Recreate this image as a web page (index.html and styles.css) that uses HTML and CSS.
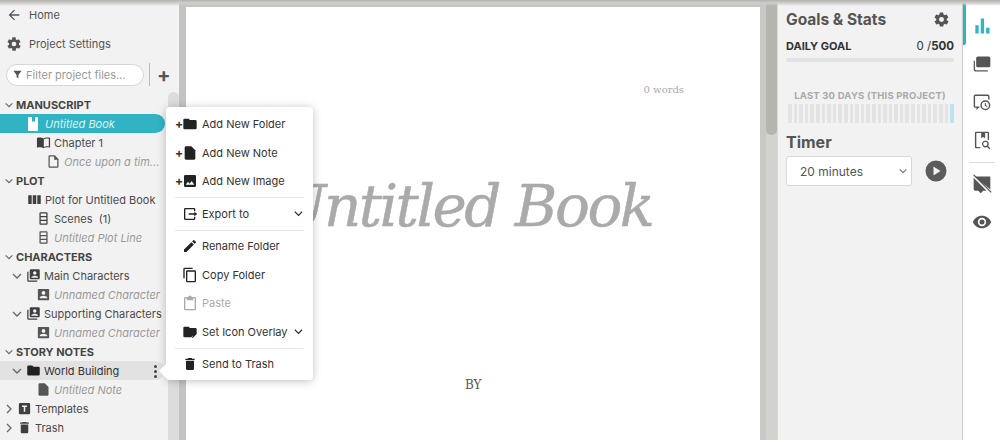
FILE: index.html
```html
<!DOCTYPE html>
<html lang="en">
<head>
<meta charset="utf-8">
<title>Untitled Book</title>
<link rel="stylesheet" href="styles.css">
</head>
<body>
<svg class="defs" width="0" height="0" aria-hidden="true">
  <symbol id="i-folder" viewBox="0 0 24 24"><path d="M10 4H4a2 2 0 0 0-2 2v12a2 2 0 0 0 2 2h16a2 2 0 0 0 2-2V8a2 2 0 0 0-2-2h-8z"/></symbol>
  <symbol id="i-note" viewBox="0 0 24 24"><path d="M14 2H6a2 2 0 0 0-2 2v16a2 2 0 0 0 2 2h12a2 2 0 0 0 2-2V8z"/></symbol>
  <symbol id="i-person" viewBox="0 0 24 24"><path d="M20 3H4a1 1 0 0 0-1 1v16a1 1 0 0 0 1 1h16a1 1 0 0 0 1-1V4a1 1 0 0 0-1-1zm-8 3.500a3 3 0 1 1 0 6 3 3 0 0 1 0-6zM18 18H6v-1c0-2 4-3.100 6-3.100s6 1.100 6 3.100z" fill-rule="evenodd"/></symbol>
  <symbol id="i-persons" viewBox="0 0 24 24"><path d="M2 6h2v14h14v2H4a2 2 0 0 1-2-2z"/><path fill-rule="evenodd" d="M8 2h12a2 2 0 0 1 2 2v12a2 2 0 0 1-2 2H8a2 2 0 0 1-2-2V4a2 2 0 0 1 2-2zm6 3a2.800 2.800 0 1 0 0 5.600A2.800 2.800 0 0 0 14 5zm-5.500 10.500h11V15c0-1.800-3.700-2.800-5.500-2.800S8.500 13.200 8.500 15z"/></symbol>
  <symbol id="i-lane" viewBox="0 0 24 24"><path fill-rule="evenodd" d="M7 2h10a1.500 1.500 0 0 1 1.500 1.500v17A1.500 1.500 0 0 1 17 22H7a1.500 1.500 0 0 1-1.500-1.500v-17A1.500 1.500 0 0 1 7 2zm.500 2v4h9V4zm0 6v4h9v-4zm0 6v4h9v-4z"/></symbol>
  <symbol id="i-trash" viewBox="0 0 24 24"><path d="M6 19a2 2 0 0 0 2 2h8a2 2 0 0 0 2-2V7H6zM19 4h-3.500l-1-1h-5l-1 1H5v2h14z"/></symbol>
  <symbol id="i-gear" viewBox="0 0 24 24"><path d="M19.400 13c.04-.3.100-.7.100-1s-.03-.7-.1-1l2.100-1.600c.2-.15.25-.4.1-.65l-2-3.460c-.12-.22-.4-.3-.6-.22l-2.500 1a7.400 7.400 0 0 0-1.700-1l-.4-2.650A.5.500 0 0 0 14 2h-4a.5.500 0 0 0-.5.420l-.4 2.650c-.6.250-1.200.6-1.700 1l-2.500-1c-.2-.08-.5 0-.6.220l-2 3.460c-.13.220-.08.500.1.650L4.600 11c-.04.300-.1.700-.1 1s.03.700.1 1l-2.100 1.600c-.2.150-.25.400-.1.650l2 3.460c.12.220.4.300.6.220l2.500-1c.5.400 1.100.750 1.700 1l.4 2.650c.04.240.25.420.5.420h4c.25 0 .46-.18.500-.42l.4-2.650c.6-.25 1.200-.6 1.700-1l2.500 1c.2.080.5 0 .6-.22l2-3.460c.13-.22.080-.5-.1-.65zM12 15.500a3.500 3.500 0 1 1 0-7 3.500 3.500 0 0 1 0 7z"/></symbol>
  <symbol id="i-down" viewBox="0 0 12 12"><path d="M2 4l4 4 4-4" fill="none" stroke="currentColor" stroke-width="1.300"/></symbol>
  <symbol id="i-right" viewBox="0 0 12 12"><path d="M4 2l4 4-4 4" fill="none" stroke="currentColor" stroke-width="1.300"/></symbol>
</svg>

<div class="topline"></div>
<div class="app">
  <aside class="sidebar">
    <a class="nav-link"><svg class="nav-icon" viewBox="0 0 24 24"><path d="M20 11H7.800l5.600-5.600L12 4l-8 8 8 8 1.400-1.400L7.800 13H20z"/></svg>Home</a>
    <a class="nav-link"><svg class="nav-icon"><use href="#i-gear"/></svg>Project Settings</a>
    <div class="filter-row">
      <div class="filter"><svg class="filter-icon" viewBox="0 0 24 24"><path d="M3 4h18l-7 9v7l-4-2v-5z"/></svg>Filter project files...</div>
      <span class="filter-sep"></span>
      <span class="plus">+</span>
    </div>

    <div class="tree">
      <div class="row sec"><svg class="tw"><use href="#i-down"/></svg>MANUSCRIPT</div>
      <div class="row selected ind-28"><svg class="ic book" viewBox="0 0 10 14"><path fill-rule="evenodd" d="M1 0h8a1 1 0 0 1 1 1v12a1 1 0 0 1-1 1H1a1 1 0 0 1-1-1V1a1 1 0 0 1 1-1zm3 0v5l1.500-1L7 5V0z"/></svg>Untitled Book</div>
      <div class="row ind-35"><svg class="ic" viewBox="0 0 24 24"><path d="M12 5.500C10.500 4.500 8 4 6 4c-1.500 0-3 .2-4.500.8v15.500C3 19.700 4.500 19.500 6 19.500c2 0 4.500.5 6 1.500 1.500-1 4-1.500 6-1.500 1.500 0 3 .2 4.500.8V4.800C21 4.200 19.500 4 18 4c-2 0-4.500.5-6 1.500zm8.500 13c-1-.3-1.800-.4-2.500-.4-2 0-4.500.8-5.500 1.400V7c1-.6 3.500-1.400 5.500-1.400.7 0 1.500.1 2.500.3z"/></svg>Chapter 1</div>
      <div class="row muted ind-45"><svg class="ic" viewBox="0 0 24 24"><path d="M14 2H6a2 2 0 0 0-2 2v16a2 2 0 0 0 2 2h12a2 2 0 0 0 2-2V8zm4 18H6V4h7v5h5z"/></svg>Once upon a tim...</div>
      <div class="row sec"><svg class="tw"><use href="#i-down"/></svg>PLOT</div>
      <div class="row ind-26"><svg class="ic" viewBox="0 0 24 24"><path d="M2 5h5.500v14H2zm7.200 0h5.600v14H9.200zm7.300 0H22v14h-5.500z"/></svg>Plot for Untitled Book</div>
      <div class="row ind-35"><svg class="ic"><use href="#i-lane"/></svg>Scenes&nbsp; (1)</div>
      <div class="row muted ind-35"><svg class="ic"><use href="#i-lane"/></svg>Untitled Plot Line</div>
      <div class="row sec"><svg class="tw"><use href="#i-down"/></svg>CHARACTERS</div>
      <div class="row ind-13"><svg class="tw"><use href="#i-down"/></svg><svg class="ic"><use href="#i-persons"/></svg>Main Characters</div>
      <div class="row muted ind-35"><svg class="ic"><use href="#i-person"/></svg>Unnamed Character</div>
      <div class="row ind-13"><svg class="tw"><use href="#i-down"/></svg><svg class="ic"><use href="#i-persons"/></svg>Supporting Characters</div>
      <div class="row muted ind-35"><svg class="ic"><use href="#i-person"/></svg>Unnamed Character</div>
      <div class="row sec"><svg class="tw"><use href="#i-down"/></svg>STORY NOTES</div>
      <div class="row active ind-13"><svg class="tw"><use href="#i-down"/></svg><svg class="ic dark"><use href="#i-folder"/></svg>World Building<span class="dots"><i></i><i></i><i></i></span></div>
      <div class="row muted ind-35"><svg class="ic"><use href="#i-note"/></svg>Untitled Note</div>
      <div class="row ind-4"><svg class="tw"><use href="#i-right"/></svg><svg class="ic" viewBox="0 0 24 24"><path fill-rule="evenodd" d="M5 3h14a2 2 0 0 1 2 2v14a2 2 0 0 1-2 2H5a2 2 0 0 1-2-2V5a2 2 0 0 1 2-2zm3 4v2.500h2.800V17h2.400V9.500H16V7z"/></svg>Templates</div>
      <div class="row ind-4"><svg class="tw"><use href="#i-right"/></svg><svg class="ic"><use href="#i-trash"/></svg>Trash</div>
    </div>
    <div class="side-thumb"></div>
  </aside>

  <main class="center">
    <div class="page">
      <div class="wordcount">0 words</div>
      <h1 class="book-title">Untitled Book</h1>
      <div class="by">BY</div>
    </div>
    <div class="center-scroll"><div class="center-thumb"></div></div>
  </main>

  <section class="stats">
    <div class="stats-head"><h2>Goals &amp; Stats</h2><svg class="stats-gear"><use href="#i-gear"/></svg></div>
    <div class="goal-row"><b>DAILY GOAL</b><span>0 /<b>500</b></span></div>
    <div class="goal-bar"></div>
    <div class="last30">LAST 30 DAYS (THIS PROJECT)</div>
    <div class="days">
      <i></i><i></i><i></i><i></i><i></i><i></i><i></i><i></i><i></i><i></i>
      <i></i><i></i><i></i><i></i><i></i><i></i><i></i><i></i><i></i><i></i>
      <i></i><i></i><i></i><i></i><i></i><i></i><i></i><i></i><i></i><i class="today"></i>
    </div>
    <h3 class="timer-title">Timer</h3>
    <div class="timer-row">
      <div class="select">20 minutes<svg class="select-arrow"><use href="#i-down"/></svg></div>
      <svg class="play" viewBox="0 0 24 24"><path fill-rule="evenodd" d="M12 1.500a10.500 10.500 0 1 1 0 21 10.500 10.500 0 0 1 0-21zM9.500 7.500v9l7-4.500z"/></svg>
    </div>
  </section>

  <nav class="rail">
    <div class="rail-item current"><svg viewBox="0 0 24 24" class="teal"><path d="M4 11h4v10H4zM10.500 3h4v18h-4zM17 14h4v7h-4z"/></svg></div>
    <div class="rail-item"><svg viewBox="0 0 24 24"><path d="M7 3h13a2 2 0 0 1 2 2v9a2 2 0 0 1-2 2H7a2 2 0 0 1-2-2V5a2 2 0 0 1 2-2z"/><path d="M2 8h1.500v10a1.500 1.500 0 0 0 1.500 1.500h14V21H4a2 2 0 0 1-2-2z"/></svg></div>
    <div class="rail-item"><svg viewBox="0 0 24 24"><path d="M4 3h15a2 2 0 0 1 2 2v4h-1.700V5a.4.400 0 0 0-.3-.3H4a.4.400 0 0 0-.3.300v12c0 .2.100.3.300.3h5V19H8l-2.500 3v-3H4a2 2 0 0 1-2-2V5a2 2 0 0 1 2-2z"/><path fill-rule="evenodd" d="M16 10a6 6 0 1 1 0 12 6 6 0 0 1 0-12zm0 1.700a4.300 4.300 0 1 0 0 8.600 4.300 4.300 0 0 0 0-8.600zm-.7 1.500h1.300v2.700l2 1.200-.6 1-2.700-1.600z"/></svg></div>
    <div class="rail-item"><svg viewBox="0 0 24 24"><path d="M5 2h14a1.500 1.500 0 0 1 1.500 1.500V12h-1.700V3.700h-3V10l-2.500-1.500L11 10V3.700H5.200v16.600H10V22H5a1.500 1.500 0 0 1-1.500-1.500v-17A1.500 1.500 0 0 1 5 2z"/><path fill-rule="evenodd" d="M16 12.500a4.200 4.200 0 0 1 3.400 6.700l2.800 2.800-1.200 1.200-2.800-2.800A4.200 4.200 0 1 1 16 12.500zm0 1.700a2.500 2.500 0 1 0 0 5 2.500 2.500 0 0 0 0-5z"/></svg></div>
    <div class="rail-sep"></div>
    <div class="rail-item"><svg viewBox="0 0 24 24"><path d="M3 3h19v15.500zM2 4.500 17.500 20H13.500L10.500 23 7.500 20H4a2 2 0 0 1-2-2z"/><path d="M2 1 23 22" stroke="#555" stroke-width="1.500"/></svg></div>
    <div class="rail-item"><svg viewBox="0 0 24 24"><path fill-rule="evenodd" d="M12 4.500C7 4.500 2.700 7.600 1 12c1.700 4.400 6 7.500 11 7.500s9.300-3.100 11-7.500c-1.700-4.400-6-7.500-11-7.500zM12 17a5 5 0 1 1 0-10 5 5 0 0 1 0 10zm0-8a3 3 0 1 0 0 6 3 3 0 0 0 0-6z"/></svg></div>
  </nav>
</div>

<div class="menu">
  <div class="menu-item"><span class="add">+</span><svg class="mi"><use href="#i-folder"/></svg>Add New Folder</div>
  <div class="menu-item"><span class="add">+</span><svg class="mi"><use href="#i-note"/></svg>Add New Note</div>
  <div class="menu-item"><span class="add">+</span><svg class="mi" viewBox="0 0 24 24"><path fill-rule="evenodd" d="M5 3h14a2 2 0 0 1 2 2v14a2 2 0 0 1-2 2H5a2 2 0 0 1-2-2V5a2 2 0 0 1 2-2zm.500 14.500h13l-4-5.500-3.200 4-2.300-2.800z"/></svg>Add New Image</div>
  <hr class="menu-sep">
  <div class="menu-item"><svg class="mi" viewBox="0 0 24 24"><path d="M5 3h13a2 2 0 0 1 2 2v3h-2V5H5v14h13v-3h2v3a2 2 0 0 1-2 2H5a2 2 0 0 1-2-2V5a2 2 0 0 1 2-2z"/><path d="M10 11h8.500V8.500L23 12l-4.500 3.500V13H10z"/></svg>Export to<svg class="chev"><use href="#i-down"/></svg></div>
  <hr class="menu-sep">
  <div class="menu-item"><svg class="mi" viewBox="0 0 24 24"><path d="M3 17.300V21h3.700L17.800 9.900l-3.700-3.700zM20.700 7a1 1 0 0 0 0-1.400l-2.300-2.300a1 1 0 0 0-1.400 0l-1.800 1.800 3.700 3.700z"/></svg>Rename Folder</div>
  <div class="menu-item"><svg class="mi" viewBox="0 0 24 24"><path d="M16 1H4a2 2 0 0 0-2 2v14h2V3h12z"/><path fill-rule="evenodd" d="M19 5H8a2 2 0 0 0-2 2v14a2 2 0 0 0 2 2h11a2 2 0 0 0 2-2V7a2 2 0 0 0-2-2zm0 16H8V7h11z"/></svg>Copy Folder</div>
  <div class="menu-item disabled"><svg class="mi" viewBox="0 0 24 24"><path fill-rule="evenodd" d="M19 3h-4.200C14.400 1.800 13.300 1 12 1s-2.400.8-2.800 2H5a2 2 0 0 0-2 2v16a2 2 0 0 0 2 2h14a2 2 0 0 0 2-2V5a2 2 0 0 0-2-2zm0 18H5V5h2v3h10V5h2z"/></svg>Paste</div>
  <div class="menu-item"><svg class="mi" viewBox="0 0 24 24"><path d="M10 4H4a2 2 0 0 0-2 2v12a2 2 0 0 0 2 2h10l1-2.500 3 1 4-4V8a2 2 0 0 0-2-2h-8z"/><path d="M16 21l-2.500-2.500 1-1L16 19l5-5 1 1z"/></svg>Set Icon Overlay<svg class="chev"><use href="#i-down"/></svg></div>
  <hr class="menu-sep">
  <div class="menu-item"><svg class="mi"><use href="#i-trash"/></svg>Send to Trash</div>
</div>
</body>
</html>
```
FILE: styles.css
```css
* { box-sizing: border-box; }
html, body { margin: 0; height: 100%; overflow: hidden; }
body { font-family: Inter, "Liberation Sans", sans-serif; color: #3c3c3c; background: #fff; position: relative; }
.defs { display: block; position: absolute; }
.topline { height: 6px; margin-bottom: -6px; background: linear-gradient(#b4b2ad 0, #cfcecb 3px, #fff0 6px); position: relative; z-index: 3; }
.app { display: flex; height: 440px; }

.sidebar { width: 179px; flex: none; background: #f2f2f2; position: relative; overflow: hidden; }
.nav-link { display: flex; align-items: center; height: 29px; padding-left: 6px; font-size: 11px; color: #555; gap: 7px; }
.nav-icon { width: 16px; height: 16px; fill: #555; flex: none; }
.filter-row { display: flex; align-items: center; margin-top: 1px; padding: 0 0 0 6px; height: 31px; }
.filter { width: 138px; height: 22px; border: 1px solid #d6d6d6; border-radius: 11px; background: #fff; color: #9a9a9a; font-size: 11px; display: flex; align-items: center; padding-left: 5px; gap: 3px; flex: none; }
.filter-icon { width: 11px; height: 11px; fill: #555; flex: none; }
.filter-sep { width: 1px; height: 23px; background: #bbb; margin-left: 5px; }
.plus { font-size: 20px; font-weight: 700; color: #555; margin-left: 7px; line-height: 20px; }

.tree { margin-top: 5px; }
.row { height: 19px; display: flex; align-items: center; font-size: 11px; color: #4a4a4a; white-space: nowrap; position: relative; }
.sec { font-weight: 700; color: #444; padding-left: 4px; font-size: 11px; }
.ic { width: 15px; height: 15px; fill: #3f3f3f; flex: none; margin-right: 3px; }
.ic.dark { fill: #222; }
.tw { width: 12px; height: 12px; color: #666; flex: none; }
.sec .tw { width: 10px; margin-right: 2px; }
.muted { color: #9a9a9a; font-style: italic; }
.muted .ic { fill: #555; }
.selected { background: #31b3c4; color: #dff4f7; font-style: italic; width: 165px; border-radius: 0 10px 10px 0; }
.selected .ic.book { fill: #fff; width: 10px; height: 14px; margin-right: 7px; }
.active { background: #e2e2e2; width: 165px; color: #333; border-radius: 0 10px 10px 0; }
.ind-4 { padding-left: 3px; }
.ind-4 .tw { margin-right: 2px; }
.ind-13 { padding-left: 11px; }
.ind-13 .tw { margin-right: 3px; }
.ind-26 { padding-left: 27px; }
.ind-28 { padding-left: 28px; }
.ind-35 { padding-left: 36px; }
.ind-45 { padding-left: 46px; }
.dots { position: absolute; left: 154px; top: 4px; display: flex; flex-direction: column; gap: 2px; }
.dots i { display: block; width: 3px; height: 3px; border-radius: 50%; background: #444; }
.side-thumb { position: absolute; left: 168px; top: 92px; width: 11px; bottom: 0; border-radius: 6px 6px 0 0; background: #dcdcdc; }

.center { flex: 1; background: #c3c3bf; display: flex; padding-left: 7px; position: relative; overflow: hidden; }
.page { width: 574px; background: #fff; margin-top: 7px; position: relative; flex: none; text-align: center; font-family: "DejaVu Serif", serif; }
.wordcount { position: absolute; right: 76px; top: 77px; font-size: 10px; color: #aaa; }
.book-title { position: absolute; left: -8px; width: 574px; top: 165px; margin: 0; font-size: 58px; font-weight: 400; font-style: italic; color: #aaa; letter-spacing: -2.500px; white-space: nowrap; -webkit-text-stroke: .5px #aaa; }
.by { position: absolute; left: 279px; top: 371px; font-size: 12px; color: #555; }
.center-scroll { flex: 1; position: relative; background: linear-gradient(90deg, #c8c8c4 0 6px, #d2d2ce 6px); }
.center-thumb { width: 11px; height: 135px; margin-left: 6px; background: #b5b5b0; border-radius: 0 0 5px 5px; }

.stats { width: 186px; flex: none; background: #f2f2f2; border-left: 1px solid #d9d9d9; border-right: 1px solid #ccc; padding: 0 8px; }
.stats-head { display: flex; align-items: center; justify-content: space-between; height: 38px; padding-right: 4px; }
.stats-head h2 { margin: 0; font-size: 15.500px; font-weight: 700; color: #555; }
.stats-gear { width: 17px; height: 17px; fill: #555; }
.goal-row { display: flex; justify-content: space-between; align-items: center; font-size: 11px; height: 16px; color: #333; }
.goal-row span { font-size: 11.500px; }
.goal-bar { height: 4px; margin-top: 4px; background: #e2e2e2; border-radius: 2px; }
.last30 { margin-top: 28px; text-align: center; font-size: 9.500px; font-weight: 700; color: #aaa; letter-spacing: .2px; white-space: nowrap; }
.days { display: flex; gap: 2px; height: 19px; margin: 3px 0 0 2px; width: 166px; }
.days i { flex: 1; background: #e3e3e3; }
.days i.today { background: #bfe3ea; }
.timer-title { margin: 9px 0 4px; font-size: 16px; font-weight: 700; color: #555; }
.timer-row { display: flex; align-items: center; }
.select { width: 126px; height: 30px; border: 1px solid #d9d9d9; border-radius: 3px; background: #fff; color: #555; font-size: 12px; display: flex; align-items: center; padding-left: 13px; position: relative; flex: none; }
.select-arrow { position: absolute; right: 3px; top: 9px; width: 10px; height: 10px; color: #777; }
.play { width: 24px; height: 24px; margin-left: 12px; fill: #5c5c5c; flex: none; }

.rail { width: 37px; flex: none; background: #fff; display: flex; flex-direction: column; align-items: center; padding-top: 7px; }
.rail-item { height: 38px; width: 37px; display: flex; align-items: center; justify-content: center; position: relative; }
.rail-item svg { width: 20px; height: 20px; fill: #555; }
.rail-item svg.teal { fill: #31b3c4; }
.current::before { content: ""; position: absolute; left: 0; top: -7px; width: 3px; height: 45px; background: #31b3c4; border-radius: 0 2px 2px 0; }
.rail-sep { width: 26px; height: 1px; background: #ddd; margin: 3px 0 2px; }

.menu { position: absolute; left: 166px; top: 107px; width: 147px; height: 273px; background: #fff; border-radius: 4px; box-shadow: 0 1px 8px rgba(0,0,0,.25); padding: 3px 9px; z-index: 5; font-size: 11px; color: #333; white-space: nowrap; }
.menu::before { content: ""; position: absolute; left: -5px; top: 259px; width: 10px; height: 10px; background: #fff; transform: rotate(45deg); }
.menu-item { display: flex; align-items: center; height: 28.500px; position: relative; padding-left: 7px; }
.menu-item .add { position: absolute; left: 0; font-weight: 700; font-size: 12px; line-height: 12px; }
.mi { width: 16px; height: 16px; fill: #222; flex: none; margin-right: 4px; }
.chev { width: 11px; height: 11px; color: #222; margin-left: auto; }
.disabled { color: #aaa; }
.disabled .mi { fill: #aaa; }
.menu-sep { border: 0; height: 1px; background: #e7e7e7; margin: 1.500px 0; }
```
